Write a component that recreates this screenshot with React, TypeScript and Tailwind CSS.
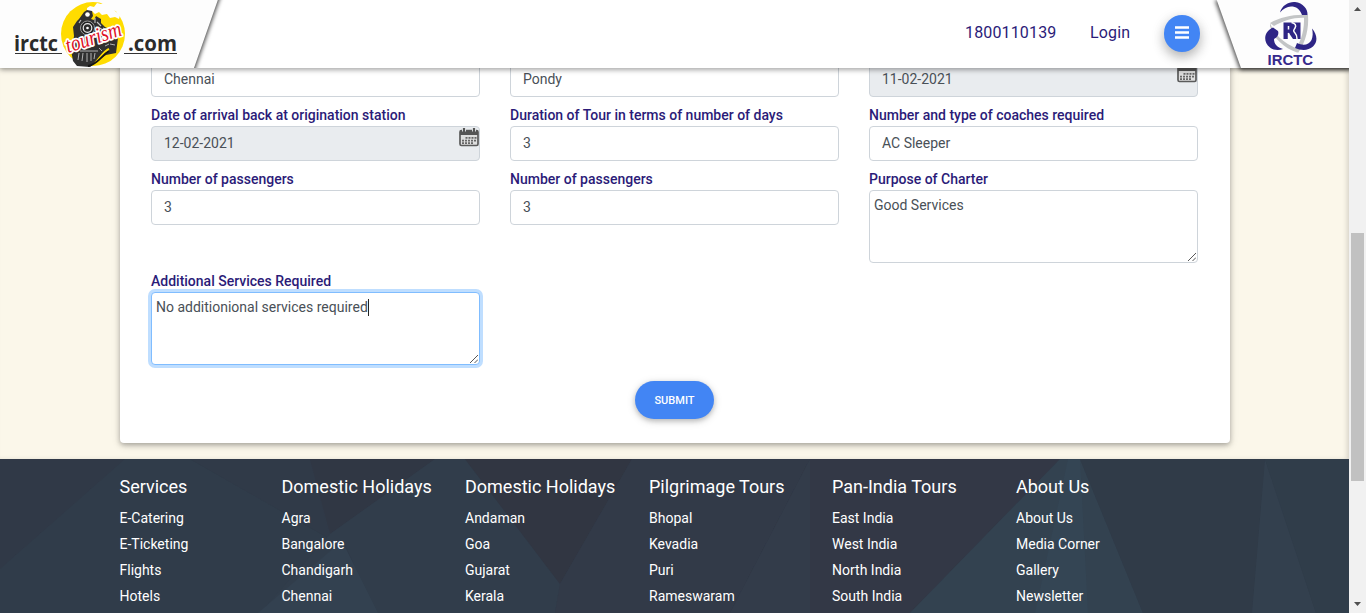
import type { ReactNode } from "react";

const links = [
  { title: "Services", width: "w-[162px]", items: ["E-Catering", "E-Ticketing", "Flights", "Hotels"] },
  { title: "Domestic Holidays", width: "w-[183.5px]", items: ["Agra", "Bangalore", "Chandigarh", "Chennai"] },
  { title: "Domestic Holidays", width: "w-[184px]", items: ["Andaman", "Goa", "Gujarat", "Kerala"] },
  { title: "Pilgrimage Tours", width: "w-[183px]", items: ["Bhopal", "Kevadia", "Puri", "Rameswaram"] },
  { title: "Pan-India Tours", width: "w-[184px]", items: ["East India", "West India", "North India", "South India"] },
  { title: "About Us", width: "w-[183px]", items: ["About Us", "Media Corner", "Gallery", "Newsletter"] },
];

function CalendarIcon() {
  return (
    <svg className="absolute top-0 right-0 h-5 w-5" viewBox="0 0 20 20">
      <rect x="1" y="3.5" width="18" height="15" rx="1.5" fill="#dedede" stroke="#5b5b5b" strokeWidth="1.7" />
      <path d="M1 3.500h18v4.500H1z" fill="#555" />
      <path d="M5 0v4.500M15 0v4.500" stroke="#e9ecef" strokeWidth="4" />
      <path d="M5 1v4M15 1v4" stroke="#555" strokeWidth="2.2" />
      <path d="M6.500 10.900h11M3 13.600h14.500M3 16.200h11.500" stroke="#666" strokeWidth="1.8" strokeDasharray="2 1" />
    </svg>
  );
}

function Resizer() {
  return (
    <svg className="absolute right-px bottom-px h-2 w-2" viewBox="0 0 8 8">
      <path d="M0 8L8 0M4.500 8L8 4.500" stroke="#444" strokeWidth="0.9" />
    </svg>
  );
}

function Label({ children }: { children: ReactNode }) {
  return <div className="h-[22px] text-sm leading-[22px] font-medium whitespace-nowrap text-[#2b1b78]">{children}</div>;
}

function Field({ label, children, disabled }: { label?: string; children: ReactNode; disabled?: boolean }) {
  return (
    <div>
      {label && <Label>{label}</Label>}
      <div
        className={
          "relative flex h-[35px] items-center rounded border border-[#ced4da] pb-px pl-3 text-sm text-[#495057] " +
          (disabled ? "bg-[#e9ecef]" : "bg-white")
        }
      >
        {children}
        {disabled && <CalendarIcon />}
      </div>
    </div>
  );
}

function TextBox({ label, value, focused }: { label: string; value: string; focused?: boolean }) {
  return (
    <div>
      <Label>{label}</Label>
      <div
        className={
          "relative flex h-[73px] items-start rounded border bg-white px-1 pt-1 text-sm leading-[21px] whitespace-nowrap text-[#495057] " +
          (focused ? "border-[#80bdff] shadow-[0_0_0_3px_#bfdeff]" : "border-[#ced4da]")
        }
      >
        {value}
        {focused && <span className="mt-[2px] h-[17px] w-px bg-[#222]" />}
        <Resizer />
      </div>
    </div>
  );
}

function BrandLogo() {
  return (
    <svg className="relative h-[68px] w-[190px]" viewBox="0 0 190 68" fontFamily="Open Sans, sans-serif">
      <text x="14" y="51" textLength="44" lengthAdjust="spacingAndGlyphs" fontSize="22" fontWeight="700" fill="#2b2b2b">
        irctc
      </text>
      <text x="128" y="51" textLength="49" lengthAdjust="spacingAndGlyphs" fontSize="22" fontWeight="700" fill="#2b2b2b">
        .com
      </text>
      <path d="M15 53.500h47M124 53.500h53" stroke="#333" />
      <circle cx="93" cy="34" r="32" fill="#ffdc00" />
      <path d="M87 8l3-2 4 1 3-4 4 1 4-2 5 2 4 4 1 3 5 4-1 4-4-2-5 1-3-4-5 1-3-3-4 2-3-3-5 1z" fill="#fdfdfd" />
      <path d="M84 12l3-2 5 1 1 5-2 3 3 1 2-4 5 3v4l4 4 10 5 3 6-2 15-10 2-8 5-8 7-13-1-4-5-2-11 2-8 1-6-1-9 4-6 2-2z" fill="#303030" />
      <circle cx="87.500" cy="14.500" r="2.300" fill="#fff" />
      <circle cx="87.500" cy="28" r="7" fill="#222" stroke="#999" strokeWidth="1" />
      <circle cx="87.500" cy="28" r="4.300" fill="#2a2a2a" stroke="#e8e8e8" strokeWidth="1.200" />
      <circle cx="87.500" cy="28" r="1.300" fill="#fff" />
      <path d="M97 22l4 4M98 27l5 3M103 28l10 5M97 32l7 2M81 20l-2 3M95 18v5M107 33l8 2M80 37l4 3" stroke="#c4c4c4" strokeWidth="1.100" />
      <path d="M80 51h18M79 53l-1 7M83 53l-1 8M87 53v9M91 53v8M95 53l-1 6M99 48l3 3M105 46l4-2M110 44l5 1" stroke="#b0b0b0" strokeWidth="1" />
      <path d="M95 63c6-6 8-11 14-14" fill="none" stroke="#ffdc00" strokeWidth="2" />
      <path d="M88 66c10-2 13-10 21-15" fill="none" stroke="#151515" strokeWidth="1.800" />
      <text
        x="68"
        y="53"
        transform="rotate(-18 68 53)"
        textLength="58"
        lengthAdjust="spacingAndGlyphs"
        fontFamily="Liberation Serif, serif"
        fontSize="22"
        fontStyle="italic"
        fill="#de1228"
        stroke="#fff"
        strokeWidth="3.500"
        strokeLinejoin="round"
        paintOrder="stroke"
      >
        tourism
      </text>
    </svg>
  );
}

function IrctcMark() {
  return (
    <svg className="h-[68px] w-[60px]" viewBox="0 0 60 68">
      <g fill="#c3c5c6">
        <path d="M10 23C21 17 34 14 48 15v3C36 16.500 24 20 14 26z" />
        <path d="M48 15c1 13-2 27-10 38l-3-3.500c7-9 9.500-21 9-33.500z" />
        <path d="M10 23c4 11 13 20 28 26l-1 3.500C24 48 13 38 10 26z" />
      </g>
      <g fill="#2e2585">
        <path d="M20 12.500C22 5 29 1.500 35 2c8 1 13 7 12.500 13H42C40 9 36 6.500 31 6.500c-4 0-8 2.500-11 6z" />
        <path d="M13 27.500C4 31 2.500 42 10 47.500c4 3 9 3 13 1.500-6-1.500-9-5-9-10 4-2 5-5 4-8z" />
        <path d="M52 28.500c6 7 5.500 14 1 18-5 4.500-12 4-18 1.500l2-5c6 3 12 2 14.500-3 1.500-3.500 1.500-7.500.5-11.500z" />
        <path d="M23.500 22.500h17v16.500h-17z" />
      </g>
      <path d="M28.500 39v-6M28.500 26v3.500M31.500 22.500c4 1 5 3 3.500 5.500s-2 3 0 5 2 3.500 2 6" fill="none" stroke="#fdfdfd" strokeWidth="1.500" />
      <path d="M28.500 32.500l4.500 6.500h-4.500z" fill="#fdfdfd" />
      <text x="7.500" y="65" textLength="45.500" lengthAdjust="spacingAndGlyphs" fontFamily="Liberation Sans, sans-serif" fontSize="15" fontWeight="700" fill="#35298c">
        IRCTC
      </text>
    </svg>
  );
}

function Header() {
  return (
    <header className="relative z-10 flex h-[68px] shrink-0 justify-between bg-white shadow-[0_2px_5px_rgba(0,0,0,0.35)]">
      <div className="relative h-[68px] w-[230px] overflow-hidden">
        <svg className="absolute inset-0 h-[68px] w-[230px]" viewBox="0 0 230 68">
          <path d="M-9-9H221L194 68V80H-9z" fill="#fdfdfd" className="drop-shadow-[1px_1px_2px_rgba(0,0,0,0.75)]" />
        </svg>
        <BrandLogo />
      </div>
      <div className="flex">
        <div className="flex items-center text-base tracking-[0.15px] text-[#2b1b78]">
          <span className="w-[125px] pb-[2px]">1800110139</span>
          <span className="w-[74px] pb-[2px]">Login</span>
          <div className="mb-[2px] flex h-[37px] w-[36px] items-center justify-center rounded-full bg-[#4285f4] shadow-[0_5px_11px_rgba(0,0,0,0.22),0_4px_15px_rgba(0,0,0,0.12)]">
            <svg className="mb-[2px] h-[13px] w-[14px]" viewBox="0 0 14 13">
              <path d="M0 1.500h14M0 6.500h14M0 11.500h14" stroke="#fff" strokeWidth="2.400" />
            </svg>
          </div>
        </div>
        <div className="relative ml-1 w-[145px]">
          <svg className="absolute inset-0 h-[80px] w-[145px]" viewBox="0 0 145 80">
            <path d="M12-2L37 68H155V-2z" fill="#fdfdfd" className="drop-shadow-[-1px_2px_2px_rgba(0,0,0,0.7)]" />
          </svg>
          <div className="relative ml-[56px]">
            <IrctcMark />
          </div>
        </div>
      </div>
    </header>
  );
}

function Footer() {
  return (
    <footer className="relative h-[154px] overflow-hidden bg-[#303b49] text-white">
      <svg className="absolute inset-0 h-full w-full" viewBox="0 0 1349 154" preserveAspectRatio="none">
        <path d="M0 0H125L0 110z" fill="#303947" />
        <path d="M125 0H190L330 80L260 154H0V110z" fill="#303c4a" />
        <path d="M190 0H310L330 80z" fill="#303a48" />
        <path d="M310 0H435L330 75z" fill="#303744" />
        <path d="M435 0H465L560 125L555 154H375L345 85L260 154L330 75z" fill="#313d4b" />
        <path d="M342 82L378 154H258z" fill="#334150" />
        <path d="M465 0H632L560 125z" fill="#313642" />
        <path d="M632 0H810L730 154H555L560 125z" fill="#323a48" />
        <path d="M810 0H1060L910 154H730z" fill="#333846" />
        <path d="M810 0V154H730z" fill="#333c4a" />
        <path d="M1060 0H1080L1143 154H910z" fill="#334250" />
        <path d="M1068 0L1080 0L1088 154H1035z" fill="#344554" />
        <path d="M1080 0H1265L1252 154H1143z" fill="#303b48" />
        <path d="M1265 0L1316 154H1252z" fill="#33404e" />
        <path d="M1265 0H1349V154H1316z" fill="#303d4a" />
      </svg>
      <div className="relative flex pt-4 pl-[119.5px]">
        {links.map((column, i) => (
          <div key={i} className={"shrink-0 whitespace-nowrap " + column.width}>
            <h3 className="mb-[6px] text-lg leading-6">{column.title}</h3>
            <ul className="text-sm leading-[26px]">
              {column.items.map((item) => (
                <li key={item}>{item}</li>
              ))}
            </ul>
          </div>
        ))}
      </div>
    </footer>
  );
}

function Scrollbar() {
  return (
    <div className="flex h-full w-[17px] flex-col items-center justify-between bg-[#f1f1f1] py-[7px]">
      <svg className="h-1 w-[7px]" viewBox="0 0 7 4">
        <path d="M3.500 0L7 4H0z" fill="#505050" />
      </svg>
      <div className="mt-[101px] h-[248px] w-[13px] bg-[#c1c1c1]" />
      <svg className="h-1 w-[7px]" viewBox="0 0 7 4">
        <path d="M0 0H7L3.500 4z" fill="#505050" />
      </svg>
    </div>
  );
}

export default function App() {
  return (
    <div className="flex h-[613px] w-[1366px] overflow-hidden font-[Roboto,sans-serif]">
      <div className="flex w-[1349px] flex-col overflow-hidden">
        <Header />
        <main className="h-[391px] overflow-hidden bg-[#fbf7ea] pl-[120px] shadow-[inset_-3px_0_5px_-1px_rgba(0,0,0,0.15)]">
          <div className="-mt-[6px] h-[381px] w-[1110px] rounded bg-white pr-8 pl-[31px] shadow-[0_2px_5px_rgba(0,0,0,0.26),0_2px_10px_rgba(0,0,0,0.14)]">
            <div className="grid grid-cols-3 gap-x-[30px] gap-y-[7px]">
              <Field>Chennai</Field>
              <Field>Pondy</Field>
              <Field disabled>11-02-2021</Field>
              <Field label="Date of arrival back at origination station" disabled>12-02-2021</Field>
              <Field label="Duration of Tour in terms of number of days">3</Field>
              <Field label="Number and type of coaches required">AC Sleeper</Field>
              <Field label="Number of passengers">3</Field>
              <Field label="Number of passengers">3</Field>
              <TextBox label="Purpose of Charter" value="Good Services" />
              <TextBox label="Additional Services Required" value="No additionional services required" focused />
            </div>
            <div className="flex justify-center pt-4">
              <button className="h-[38px] w-[79px] rounded-full bg-[#4285f4] pt-[2px] text-[11px] font-medium text-white shadow-[0_2px_5px_rgba(0,0,0,0.2),0_2px_10px_rgba(0,0,0,0.14)]">
                SUBMIT
              </button>
            </div>
          </div>
        </main>
        <Footer />
      </div>
      <Scrollbar />
    </div>
  );
}
